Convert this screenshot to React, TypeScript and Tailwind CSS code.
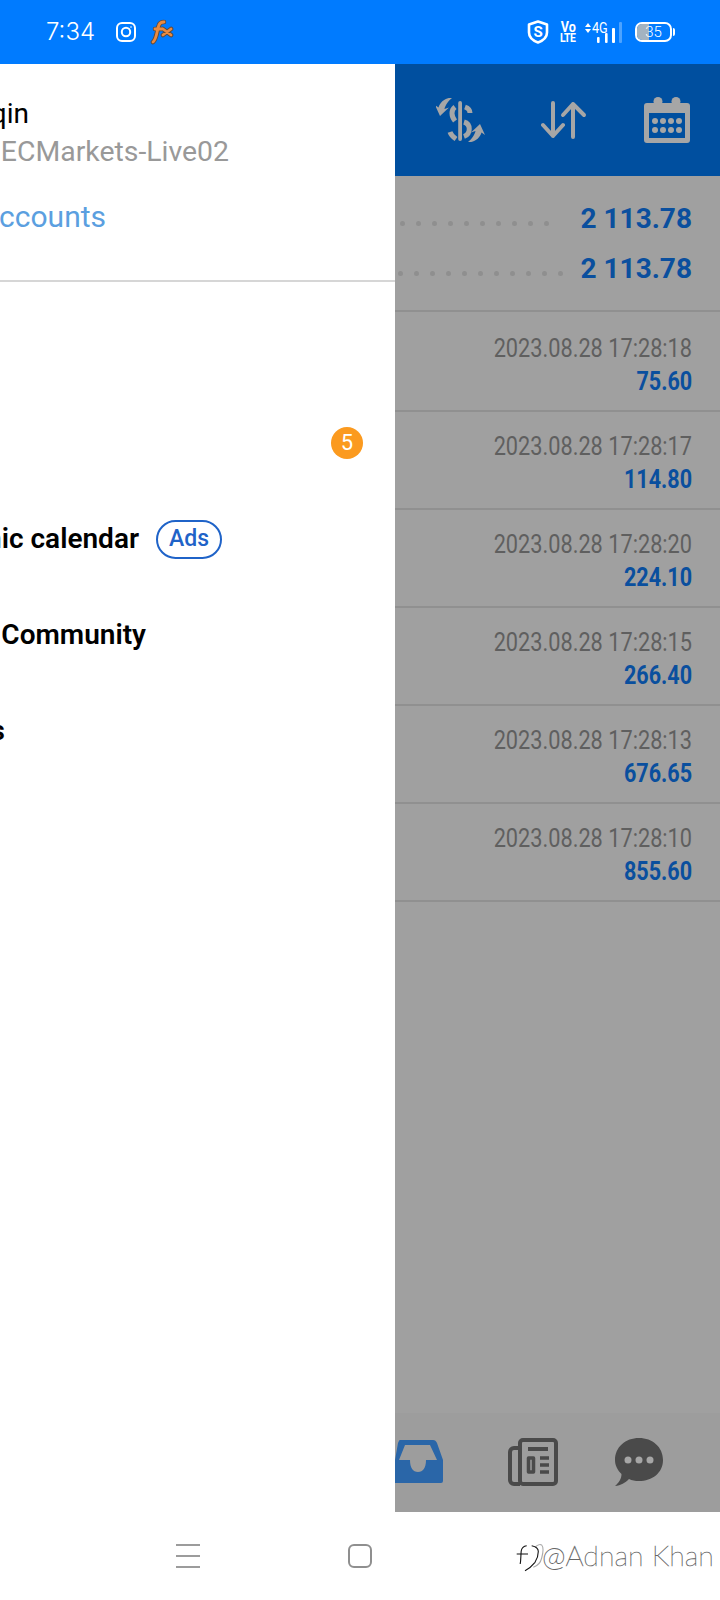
const rows = [
  ['2023.08.28 17:28:18', '75.60'],
  ['2023.08.28 17:28:17', '114.80'],
  ['2023.08.28 17:28:20', '224.10'],
  ['2023.08.28 17:28:15', '266.40'],
  ['2023.08.28 17:28:13', '676.65'],
  ['2023.08.28 17:28:10', '855.60'],
];

function Dots({ n }: { n: number }) {
  return (
    <div className="flex gap-[11px] mt-[9px]">
      {Array.from({ length: n }).map((_, i) => (
        <span key={i} className="w-[5px] h-[5px] rounded-full bg-[#8f8f8f]" />
      ))}
    </div>
  );
}

function Clip({ w, children, className }: { w: string; children: React.ReactNode; className?: string }) {
  return <div className={`flex justify-end whitespace-nowrap ${w} ${className ?? ''}`}>{children}</div>;
}

export default function App() {
  return (
    <div className="w-[720px] h-[1600px] overflow-hidden flex flex-col bg-white font-['Roboto',sans-serif]">
      <div className="h-[64px] shrink-0 bg-[#007bff] flex items-center text-white">
        <span className="ml-[46px] text-[24px] font-['Inter',sans-serif] font-light leading-none">7:34</span>
        <svg className="ml-[20px]" width="22" height="22" viewBox="0 0 22 22" fill="none" stroke="white" strokeWidth="2">
          <rect x="2" y="2" width="18" height="18" rx="5" />
          <circle cx="11" cy="11" r="4.2" />
          <circle cx="16" cy="6" r="0.8" fill="white" stroke="none" />
        </svg>
        <svg className="ml-[13px]" width="24" height="26" viewBox="0 0 24 26" fill="none" strokeLinecap="round">
          <path d="M3 23 C7 20 7 10 9 6 C10 3 12 3 14 3 M5 10 H12" stroke="#5c4a3c" strokeWidth="4.6" />
          <path d="M13 10 L21 16 M21 10 L13 16" stroke="#5c4a3c" strokeWidth="4.6" />
          <path d="M3 23 C7 20 7 10 9 6 C10 3 12 3 14 3 M5 10 H12" stroke="#ea8a40" strokeWidth="2.8" />
          <path d="M13 10 L21 16 M21 10 L13 16" stroke="#ea8a40" strokeWidth="2.8" />
        </svg>
        <div className="ml-auto mr-[45px] flex items-center">
          <svg width="22" height="24" viewBox="0 0 22 24" fill="none">
            <path d="M11 1.5 L20 4.5 V12.5 C20 17.5 15 21 11 22.5 C7 21 2 17.5 2 12.5 V4.5 Z" stroke="white" strokeWidth="2.6" strokeLinejoin="round" />
            <text x="11" y="17" textAnchor="middle" fontSize="15" fontWeight="700" fill="white" fontFamily="Roboto">S</text>
          </svg>
          <div className="ml-[12px] flex flex-col items-center font-bold w-[14px]">
            <span className="text-[14px] leading-[10px] scale-x-90">Vo</span>
            <span className="text-[13px] leading-[11px] tracking-[-0.5px] scale-x-[0.8]">LTE</span>
          </div>
          <div className="ml-[9px] relative w-[38px] h-[22px]">
            <span className="absolute left-[8px] top-[1px] text-[14px] leading-[13px] scale-x-90 origin-left">4G</span>
            <svg className="absolute left-0 top-0" width="38" height="22" viewBox="0 0 38 22" fill="white">
              <path d="M1 6 L4 2 L7 6 Z M1 8 L4 12 L7 8 Z" />
              <rect x="13" y="16" width="2.6" height="6" rx="1" />
              <rect x="21" y="12" width="2.6" height="10" rx="1" />
              <rect x="28" y="7" width="3" height="15" rx="1" />
              <rect x="35" y="1" width="3" height="21" rx="1" opacity="0.3" />
            </svg>
          </div>
          <div className="ml-[13px] relative w-[37px] h-[20px] rounded-[7px] border-[2px] border-white overflow-hidden flex items-center justify-center">
            <span className="absolute left-0 top-0 bottom-0 w-[12px] bg-[#a3b3c0]" />
            <span className="relative text-[15px] font-light leading-none">35</span>
          </div>
          <span className="ml-[1px] w-[2px] h-[8px] rounded-r bg-white" />
        </div>
      </div>

      <div className="flex-1 flex min-h-0">
        <div className="w-[395px] shrink-0 bg-white overflow-hidden flex flex-col">
          <div className="h-[218px] shrink-0 border-b-[2px] border-[#d6d6d6]">
            <Clip w="w-[29px]" className="mt-[32px] text-[28px] leading-[36px] text-black"><span>qin</span></Clip>
            <Clip w="w-[229px]" className="mt-[2px] text-[28.4px] leading-[36px] text-[#999999]"><span>ECMarkets-Live02</span></Clip>
            <Clip w="w-[106px]" className="mt-[29px] text-[30px] leading-[36px] text-[#5b9fe0]"><span>ccounts</span></Clip>
          </div>
          <div className="pt-[17px] flex flex-col">
            <div className="h-[96px]" />
            <div className="h-[96px] flex items-center justify-end pr-[32px]">
              <span className="w-[32px] h-[32px] rounded-full bg-[#fb9a1f] text-white text-[22px] leading-none flex items-center justify-center">5</span>
            </div>
            <div className="h-[96px] flex items-center">
              <Clip w="w-[139px]" className="text-[28px] font-semibold text-black"><span>nic calendar</span></Clip>
              <span className="ml-[17px] w-[66px] h-[39px] rounded-full border-[2px] border-[#1f63c8] text-[#1f63c8] text-[23px] font-medium flex items-center justify-center">Ads</span>
            </div>
            <div className="h-[96px] flex items-center">
              <Clip w="w-[146px]" className="text-[28px] font-semibold text-black"><span>Community</span></Clip>
            </div>
            <div className="h-[96px] flex items-center">
              <Clip w="w-[5px]" className="text-[28px] font-semibold text-black"><span>s</span></Clip>
            </div>
          </div>
        </div>

        <div className="flex-1 min-w-0 bg-[#a0a0a0] flex flex-col">
          <div className="h-[112px] shrink-0 bg-[#004f9f] flex items-center text-[#a6a6a6]">
            <svg className="ml-[41px]" width="50" height="44" viewBox="0 0 50 44" fill="#a6a6a6">
              <rect x="22.2" y="3" width="3.8" height="40" rx="1.9" />
              <g fill="none" stroke="#a6a6a6" strokeWidth="5">
                <path d="M29 9 C32 10 34 12 34 15" />
                <path d="M19 9 C15 12 15 18 19 23" />
                <path d="M28 24 C35 26 35 36 28 38.5" />
                <path d="M14 34 C15 37 17 39 20 41" />
              </g>
              <path d="M32 44 C36 41 39 36 39.5 33 L35 34.5 L44 26 L49 37 L45.5 34.5 C44 40 38 45 32 44 Z" />
              <path d="M16 0 C12 3 9 8 8.5 11 L13 9.5 L4 18 L-1 7 L2.5 9.5 C4 4 10 -1 16 0 Z" />
            </svg>
            <svg className="ml-[55px]" width="46" height="38" viewBox="0 0 46 38" fill="none" stroke="#a6a6a6" strokeWidth="4" strokeLinecap="round" strokeLinejoin="round">
              <path d="M12 2 V35 M2 24 L12 35 L22 24" />
              <path d="M32 36 V3 M22 14 L32 3 L43 14" />
            </svg>
            <svg className="ml-[57px]" width="46" height="46" viewBox="0 0 46 46" fill="#a6a6a6">
              <path fillRule="evenodd" d="M3 6 H43 A3 3 0 0 1 46 9 V43 A3 3 0 0 1 43 46 H3 A3 3 0 0 1 0 43 V9 A3 3 0 0 1 3 6 Z M5 16 V41 H41 V16 Z" />
              <circle cx="14" cy="4.5" r="4.5" />
              <circle cx="32" cy="4.5" r="4.5" />
              <circle cx="11" cy="24" r="3" /><circle cx="19" cy="24" r="3" /><circle cx="27" cy="24" r="3" /><circle cx="35" cy="24" r="3" />
              <circle cx="11" cy="33" r="3" /><circle cx="19" cy="33" r="3" /><circle cx="27" cy="33" r="3" /><circle cx="35" cy="33" r="3" />
            </svg>
          </div>
          <div className="h-[136px] shrink-0 border-b-[2px] border-[#909090] flex flex-col justify-end pb-[16px] pr-[28px]">
            <div className="flex items-center justify-end text-[28px] font-bold text-[#0a4f9e] leading-[50px]">
              <Dots n={10} />
              <span className="ml-[32px]">2 113.78</span>
            </div>
            <div className="flex items-center justify-end text-[28px] font-bold text-[#0a4f9e] leading-[50px]">
              <Dots n={11} />
              <span className="ml-[18px]">2 113.78</span>
            </div>
          </div>
          {rows.map(([t, v], i) => (
            <div key={t} className={`shrink-0 border-b-[2px] border-[#909090] flex flex-col items-end pr-[28px] ${i === 0 ? 'h-[100px] pt-[19px]' : 'h-[98px] pt-[17px]'}`}>
              <span className="text-[26.2px] leading-[34px] text-[#5f5f5f] origin-right scale-x-[0.83] whitespace-nowrap">{t}</span>
              <span className="text-[26px] leading-[32px] font-bold text-[#0a4f9e] origin-right scale-x-[0.83]">{v}</span>
            </div>
          ))}
          <div className="flex-1" />
          <div className="h-[99px] shrink-0 bg-[#9d9d9d] relative">
            <svg className="absolute left-0 top-[25px]" width="48" height="47" viewBox="0 0 48 47" fill="#2a66a8">
              <path fillRule="evenodd" d="M5 2 H38 C40 2 41 3 42 5 L48 22 V43 A2 2 0 0 1 46 45 H0 V22 L3 5 C4 3 4 2 5 2 Z M10 7 L4 22 H15 C15 30 18 34 23 34 C28 34 31 30 31 22 H42 L35 7 Z" />
            </svg>
            <svg className="absolute left-[113px] top-[25px]" width="50" height="48" viewBox="0 0 50 48" fill="none" stroke="#4a4a4a" strokeWidth="4" strokeLinejoin="round">
              <rect x="12" y="2" width="36" height="44" rx="3" />
              <path d="M12 46 H6 A4 4 0 0 1 2 42 V14 A4 4 0 0 1 6 10 H12" />
              <path d="M20 11 H40" strokeWidth="4" />
              <rect x="20.5" y="20" width="5" height="14" strokeWidth="3.5" />
              <path d="M32 20 H41 M32 27 H41 M32 34 H41" strokeWidth="3.5" />
            </svg>
            <svg className="absolute left-[220px] top-[25px]" width="48" height="48" viewBox="0 0 48 48">
              <path d="M24 0 C37.5 0 48 9 48 22 C48 35 37 43 24 43 C20 43 17 42.5 14 41 C10 45 6 47.5 0 48 C4 44.5 6.5 41 6.5 36 C2.5 32 0 27.5 0 22 C0 9 10.5 0 24 0 Z" fill="#4a4a4a" />
              <circle cx="13" cy="22" r="3.5" fill="#a6a6a6" /><circle cx="24" cy="22" r="3.5" fill="#a6a6a6" /><circle cx="35" cy="22" r="3.5" fill="#a6a6a6" />
            </svg>
          </div>
        </div>
      </div>

      <div className="h-[88px] shrink-0 bg-white relative flex items-center">
        <div className="ml-[176px] w-[24px] flex flex-col gap-[9px]">
          <span className="h-[2px] bg-[#9c9c9c]" /><span className="h-[2px] bg-[#9c9c9c]" /><span className="h-[2px] bg-[#9c9c9c]" />
        </div>
        <span className="ml-[148px] w-[24px] h-[24px] rounded-[6px] border-[2px] border-[#8f8f8f]" />
        <svg className="absolute left-[516px] top-[32px]" width="30" height="28" viewBox="0 0 30 28" fill="none" strokeWidth="1.1">
          <path d="M19 3.3 C21 1 24 0 25.7 1 C27.5 3 27.3 8 25.7 14 C24.5 19 21 22 17.3 23.3" stroke="#aaaaaa" />
          <path d="M10.7 1.7 C7.5 2 5.7 4 5.2 7 C4.7 12 5 16 4.2 20 M0.7 10 H12" stroke="#111111" />
          <path d="M15.7 1.7 C20 2.5 22.3 4 22.3 7.5 C22.3 12 20.5 16 19 18.3 C16 22 12.5 25 9 26.7" stroke="#111111" />
        </svg>
        <span className="absolute left-[542px] top-[26px] text-[28.6px] font-['Lato',sans-serif] font-thin leading-[34px] text-transparent [-webkit-text-stroke:0.5px_#666666] whitespace-nowrap">@Adnan Khan</span>
      </div>
    </div>
  );
}
